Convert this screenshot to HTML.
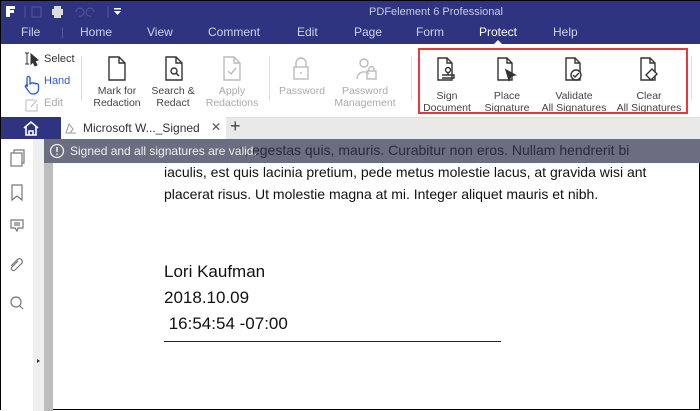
<!DOCTYPE html><html><head><style>
*{margin:0;padding:0;box-sizing:border-box}
body{width:700px;height:410px;overflow:hidden;position:relative;font-family:"Liberation Sans",sans-serif;background:#fff;border:1px solid #000}
.a{position:absolute}
.menu span{position:absolute;top:24px;font-size:12px;color:#d0d3ec}
.lbl{position:absolute;font-size:10.5px;color:#444;text-align:center;line-height:12px;width:90px;white-space:nowrap}
.gray{color:#aaa}
.doc{font-size:14px;color:#111;position:absolute;left:163px;white-space:nowrap}
svg{position:absolute}
</style></head><body>
<div class="a" style="left:0;top:0;width:700px;height:43px;background:#2e3480"></div>
<svg style="left:5px;top:4px" width="120" height="14" viewBox="0 0 120 14"><rect x="0" y="1" width="9" height="3" fill="#fff"/><rect x="0" y="4" width="4" height="8" fill="#fff"/><rect x="4" y="5" width="4" height="3" fill="#fff"/><line x1="19" y1="1" x2="19" y2="13" stroke="#555a9a"/><rect x="26" y="2" width="9" height="10" fill="none" stroke="#555a9a"/><rect x="46" y="4" width="11" height="6" fill="#ddd"/><rect x="48" y="1" width="7" height="3" fill="#ddd"/><rect x="48" y="9" width="7" height="4" fill="#ddd"/><path d="M70 7a4 4 0 1 1 3 4M88 7a4 4 0 1 0 -3 4" stroke="#555a9a" fill="none"/><line x1="102" y1="1" x2="102" y2="13" stroke="#555a9a"/><path d="M108 6h7l-3.5 4z" fill="#fff"/><rect x="108" y="3" width="7" height="1.5" fill="#fff"/></svg>
<div class="a" style="left:0;top:5px;width:700px;text-align:center;font-size:11px;color:#c8cbe6;padding-left:170px">PDFelement 6 Professional</div>
<div class="menu"><span style="left:20px">File</span><span style="left:60px;color:#555a9a">|</span><span style="left:79px">Home</span><span style="left:146px">View</span><span style="left:207px">Comment</span><span style="left:296px">Edit</span><span style="left:353px">Page</span><span style="left:415px">Form</span><span style="left:478px;color:#fff">Protect</span><span style="left:552px">Help</span></div>
<svg style="left:492px;top:38px" width="10" height="6"><path d="M0 6L5 1L10 6z" fill="#fff"/></svg>
<div class="a" style="left:0;top:43px;width:700px;height:73px;background:#fff"></div>
<div class="a" style="left:43px;top:52px;font-size:11px;color:#333">Select</div>
<div class="a" style="left:43px;top:74px;font-size:11px;color:#2b5bd0">Hand</div>
<div class="a" style="left:43px;top:96px;font-size:11px;color:#aaa">Edit</div>
<svg style="left:22px;top:50px" width="20" height="62"><path d="M2 2h4M4 2v11M2 13h4M8 3l7 6-3 1 2 4-2 1-2-4-2 2z" stroke="#333" fill="#333" stroke-width="1"/><path d="M4 36v-9a1.5 1.5 0 0 1 3 0v6l1-.5a1.5 1.5 0 0 1 2.5 0 1.5 1.5 0 0 1 2.5.5 1.5 1.5 0 0 1 2.5 1v4c0 3-2 5-5 5h-1c-2 0-3-1-4-3l-3-4a1.5 1.5 0 0 1 2-2z" stroke="#2b5bd0" fill="none" stroke-width="1.3"/><path d="M3 49h9M3 49v11h11v-7M8 56l6-7" stroke="#bbb" fill="none"/></svg>
<div class="a" style="left:80px;top:55px;width:1px;height:45px;background:#ddd"></div>
<div class="a" style="left:268px;top:55px;width:1px;height:45px;background:#ddd"></div>
<div class="a" style="left:410px;top:55px;width:1px;height:45px;background:#ddd"></div>
<div class="a" style="left:690px;top:55px;width:1px;height:45px;background:#ddd"></div>
<svg style="left:0;top:50px" width="700" height="35" fill="none" stroke-width="1.4">
<g stroke="#333"><path d="M108 6h10l6 6v17h-16z"/><path d="M118 6v6h6"/>
<path d="M165 6h10l6 6v17h-16z"/><path d="M175 6v6h6"/><circle cx="173" cy="20" r="3"/><path d="M175 22l3 3"/></g>
<g stroke="#bbb"><path d="M223 6h10l6 6v17h-16z"/><path d="M233 6v6h6M227 20l3 3 5-6"/>
<rect x="293" y="16" width="14" height="12"/><path d="M295 16v-4a5 5 0 0 1 10 0v4M300 21v2"/>
<circle cx="363" cy="12" r="4"/><path d="M356 28a7 7 0 0 1 12-5"/><rect x="366" y="20" width="9" height="8"/><path d="M368 20v-2a2.5 2.5 0 0 1 5 0v2"/></g>
<g stroke="#333"><path d="M437 7h9l5 5v17h-14z"/><path d="M446 7v5h5"/><circle cx="447" cy="19" r="2.5"/><path d="M447 22v2M441 27h12v-3h-12"/>
<path d="M497 7h9l5 5v17h-14z"/><path d="M506 7v5h5"/><path d="M505 19l9 5-4 1-2 4z" fill="#333"/>
<path d="M565 7h9l5 5v17h-14z"/><path d="M574 7v5h5"/><circle cx="575" cy="24" r="5" fill="#fff"/><path d="M572 24l2 2 4-4"/>
<path d="M640 7h9l5 5v17h-14z"/><path d="M649 7v5h5"/><path d="M645 24l6-6 5 5-6 6z" fill="#fff"/></g>
</svg>
<div class="lbl" style="left:71px;top:84px">Mark for<br>Redaction</div>
<div class="lbl" style="left:127px;top:84px">Search &amp;<br>Redact</div>
<div class="lbl gray" style="left:186px;top:84px">Apply<br>Redactions</div>
<div class="lbl gray" style="left:256px;top:84px">Password</div>
<div class="lbl gray" style="left:319px;top:84px">Password<br>Management</div>
<div class="lbl" style="left:401px;top:89px">Sign<br>Document</div>
<div class="lbl" style="left:461px;top:89px">Place<br>Signature</div>
<div class="lbl" style="left:528px;top:89px">Validate<br>All Signatures</div>
<div class="lbl" style="left:603px;top:89px">Clear<br>All Signatures</div>
<div class="a" style="left:417px;top:47px;width:270px;height:66px;border:2px solid #e8383d"></div>
<div class="a" style="left:0;top:116px;width:700px;height:22px;background:#e9e9e9;border-top:1px solid #ddd"></div>
<div class="a" style="left:0;top:116px;width:60px;height:22px;background:#2e3480"></div>
<svg style="left:21px;top:119px" width="18" height="16"><path d="M2 8l7-6 7 6M4 7v8h10V7M7 15v-4h4v4" stroke="#fff" stroke-width="1.6" fill="none"/></svg>
<div class="a" style="left:60px;top:116px;width:165px;height:22px;background:#fff"></div>
<svg style="left:64px;top:121px" width="12" height="12"><path d="M1 11l3-9 4 5-3 4zM3 11h8" stroke="#999" fill="none"/></svg>
<div class="a" style="left:82px;top:120px;font-size:12px;color:#333">Microsoft W..._Signed</div>
<div class="a" style="left:210px;top:119px;font-size:12px;color:#555">✕</div>
<div class="a" style="left:229px;top:115px;font-size:18px;color:#444">+</div>
<div class="a" style="left:0;top:138px;width:32px;height:272px;background:#fff"></div>
<div class="a" style="left:32px;top:138px;width:11px;height:272px;background:#efefef"></div>
<div class="a" style="left:43px;top:138px;width:9px;height:272px;background:#bdbdbd"></div>
<svg style="left:0;top:138px" width="43" height="272" fill="none" stroke="#777" stroke-width="1.2">
<rect x="10" y="14" width="11" height="13"/><path d="M13 14v-3h10v13h-2"/>
<path d="M11 46h10v15l-5-4-5 4z"/>
<path d="M10 81h12v8h-5l-1 3-2-3h-4zM13 84h6M13 86h6"/>
<path d="M17 122l-6 6a2 2 0 0 0 3 3l7-7a3 3 0 0 0-4-4l-7 7"/>
<circle cx="15" cy="163" r="5"/><path d="M19 167l3 3"/>
<path d="M36 220l3 2-3 2z" fill="#333" stroke="none"/>
</svg>
<div class="a" style="left:43px;top:138px;width:657px;height:24px;background:#6b6e80"></div>
<div class="doc" style="top:141px;color:#2a2c3a">dapibus eget, egestas quis, mauris. Curabitur non eros. Nullam hendrerit bi</div>
<div class="doc" style="top:163px">iaculis, est quis lacinia pretium, pede metus molestie lacus, at gravida wisi ant</div>
<div class="doc" style="top:185px">placerat risus. Ut molestie magna at mi. Integer aliquet mauris et nibh.</div>
<div class="a" style="left:43px;top:138px;width:210px;height:24px;background:linear-gradient(90deg,#6b6e80 88%,rgba(107,110,128,0))"></div>
<svg style="left:48px;top:142px" width="16" height="16"><circle cx="8" cy="8" r="6.5" stroke="#eee" stroke-width="1.3" fill="none"/><path d="M8 4v5M8 10.5v1.5" stroke="#eee" stroke-width="1.5"/></svg>
<div class="a" style="left:69px;top:143px;font-size:12px;color:#f0f0f0">Signed and all signatures are valid.</div>
<div class="doc" style="top:261px;font-size:17px">Lori Kaufman</div>
<div class="doc" style="top:287px;font-size:17px">2018.10.09</div>
<div class="doc" style="top:313px;font-size:17px">&nbsp;16:54:54 -07:00</div>
<div class="a" style="left:163px;top:340px;width:337px;height:1px;background:#222"></div>
</body></html>
